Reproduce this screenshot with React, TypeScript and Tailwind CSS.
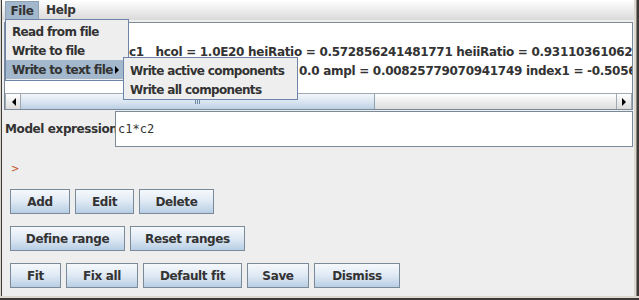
const FONT = { fontFamily: '"DejaVu Sans", "Liberation Sans", sans-serif' };

function Btn({ label, w }: { label: string; w: string }) {
  return (
    <div
      className={`${w} h-[25px] flex items-center justify-center border border-[#7a8a99] bg-linear-to-b from-[#f6f9fc] via-[#dfe9f4] to-[#b8cee4] text-[12px] font-bold tracking-[-0.35px] text-[#333333] whitespace-nowrap`}
    >
      {label}
    </div>
  );
}

function Arrow({ dir }: { dir: "left" | "right" }) {
  return (
    <div className="w-[16px] h-[15px] shrink-0 flex items-center justify-center border-r border-l border-[#a0aab4] bg-linear-to-b from-white to-[#dcdcdc]">
      <svg width="5" height="8" viewBox="0 0 5 8">
        {dir === "left" ? (
          <polygon points="5,0 5,8 1,4" fill="#000" />
        ) : (
          <polygon points="0,0 0,8 4,4" fill="#000" />
        )}
      </svg>
    </div>
  );
}

export default function App() {
  return (
    <div className="w-[639px] h-[300px] flex flex-col bg-[#eeeeee] overflow-hidden" style={FONT}>
      <div className="flex flex-1 min-h-0">
        <div className="w-px bg-[#d8d4cc]" />
        <div className="w-px bg-[#3c3a36]" />
        <div className="relative flex-1 min-w-0 flex flex-col">
          {/* menu bar */}
          <div className="h-[20px] flex items-stretch pl-[3px] bg-linear-to-b from-white to-[#dadada] text-[12px] font-bold tracking-[-0.35px] text-[#333333]">
            <div className="mt-[1px] w-[34px] flex items-center justify-center bg-[#a3b8cc] border border-[#8ea2b6]">
              File
            </div>
            <div className="px-[7px] flex items-center">Help</div>
          </div>

          <div className="flex flex-col pl-[2px] pr-[1px] min-w-0">
            {/* scroll pane */}
            <div className="mt-[2px] h-[88px] min-w-0 flex flex-col border border-[#7a8a99] bg-white">
              <div className="h-[70px] min-w-0 overflow-hidden text-[12px] font-bold tracking-[-0.3px] text-[#333333] whitespace-nowrap">
                <div className="h-[19px]" />
                <div className="h-[19px] pl-[124px] flex items-center">
                  c1&nbsp;&nbsp;&nbsp;hcol = 1.0E20 heiRatio = 0.572856241481771 heiiRatio = 0.9311036106248
                </div>
                <div className="h-[19px] pl-[294px] flex items-center">
                  0.0 ampl = 0.00825779070941749 index1 = -0.5056
                </div>
              </div>
              <div className="h-[16px] flex bg-linear-to-b from-white to-[#dcdcdc] border-t border-[#a0aab4]">
                <Arrow dir="left" />
                <div className="w-[354px] h-[15px] shrink-0 flex items-center justify-center border-r border-[#8ea2b6] bg-linear-to-b from-[#f2f6fa] via-[#dbe6f1] to-[#bcd0e4]">
                  <div className="flex gap-[1px]">
                    <div className="w-px h-[5px] bg-[#6d89a8]" />
                    <div className="w-px h-[5px] bg-[#6d89a8]" />
                    <div className="w-px h-[5px] bg-[#6d89a8]" />
                  </div>
                </div>
                <div className="flex-1" />
                <Arrow dir="right" />
              </div>
            </div>

            {/* model expression */}
            <div className="mt-[1px] flex items-center h-[36px]">
              <div className="w-[111px] shrink-0 pl-[1px] text-[12px] font-bold tracking-[-0.4px] text-[#333333] whitespace-nowrap">
                Model expression
              </div>
              <div
                className="flex-1 h-[36px] flex items-center pl-[2px] border border-[#7a8a99] bg-white text-[12px] text-[#333333]"
                style={{ fontFamily: '"DejaVu Sans Mono", "Liberation Mono", monospace' }}
              >
                c1*c2
              </div>
            </div>

            <div className="mt-[14px] h-[14px] pl-[7px] flex items-center text-[10px] text-[#c0501a]">&gt;</div>

            <div className="mt-[14px] pl-[6px] flex gap-[5px]">
              <Btn label="Add" w="w-[60px]" />
              <Btn label="Edit" w="w-[59px]" />
              <Btn label="Delete" w="w-[75px]" />
            </div>
            <div className="mt-[12px] pl-[6px] flex gap-[5px]">
              <Btn label="Define range" w="w-[115px]" />
              <Btn label="Reset ranges" w="w-[115px]" />
            </div>
            <div className="mt-[12px] pl-[6px] flex gap-[5px]">
              <Btn label="Fit" w="w-[51px]" />
              <Btn label="Fix all" w="w-[72px]" />
              <Btn label="Default fit" w="w-[99px]" />
              <Btn label="Save" w="w-[62px]" />
              <Btn label="Dismiss" w="w-[86px]" />
            </div>
          </div>

          {/* File menu popup */}
          <div className="absolute left-[3px] top-[19px] w-[124px] h-[62px] pt-[2px] border border-[#6d83a8] bg-[#eeeeee] text-[12px] font-bold tracking-[-0.65px] text-[#333333] whitespace-nowrap">
            <div className="h-[19px] pl-[6px] flex items-center">Read from file</div>
            <div className="h-[19px] pl-[6px] flex items-center">Write to file</div>
            <div className="h-[19px] pl-[6px] pr-[9px] flex items-center justify-between bg-[#a3b8cc]">
              <span>Write to text file</span>
              <svg width="4" height="8" viewBox="0 0 4 8">
                <polygon points="0,0 0,8 4,4" fill="#000" />
              </svg>
            </div>
          </div>

          {/* submenu */}
          <div className="absolute left-[121px] top-[57px] w-[175px] h-[43px] pt-[3px] border border-[#6d83a8] bg-[#eeeeee] text-[12px] font-bold tracking-[-0.65px] text-[#333333] whitespace-nowrap">
            <div className="h-[19px] pl-[6px] flex items-center">Write active components</div>
            <div className="h-[19px] pl-[6px] flex items-center">Write all components</div>
          </div>
        </div>
        <div className="w-[2px] bg-[#dcd8ce]" />
        <div className="w-px bg-[#8a8680]" />
        <div className="w-[2px] bg-[#3c3a36]" />
      </div>
      <div className="h-[2px] bg-[#dcd8ce]" />
      <div className="h-[2px] bg-[#3c3a36]" />
    </div>
  );
}
